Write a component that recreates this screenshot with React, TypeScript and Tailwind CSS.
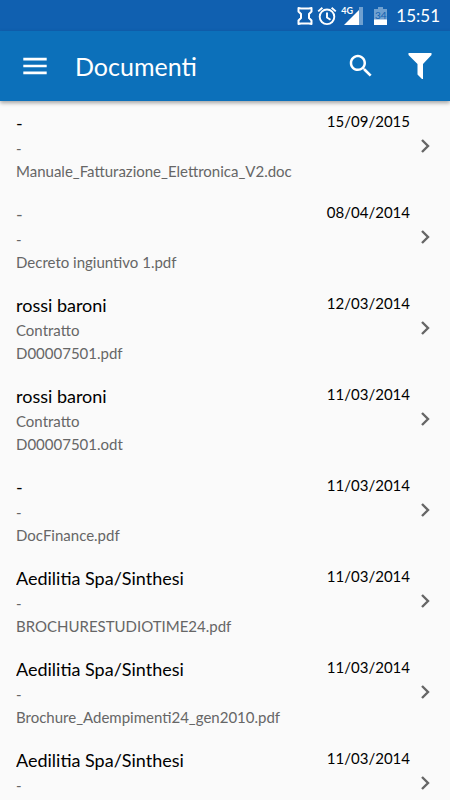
interface DocumentItem {
  id: number;
  title: string;
  subtitle: string;
  file?: string;
  date: string;
  dimmed?: boolean;
}

const documents: DocumentItem[] = [
  { id: 1, title: "-", subtitle: "-", file: "Manuale_Fatturazione_Elettronica_V2.doc", date: "15/09/2015" },
  { id: 2, title: "-", subtitle: "-", file: "Decreto ingiuntivo 1.pdf", date: "08/04/2014", dimmed: true },
  { id: 3, title: "rossi baroni", subtitle: "Contratto", file: "D00007501.pdf", date: "12/03/2014" },
  { id: 4, title: "rossi baroni", subtitle: "Contratto", file: "D00007501.odt", date: "11/03/2014" },
  { id: 5, title: "-", subtitle: "-", file: "DocFinance.pdf", date: "11/03/2014" },
  { id: 6, title: "Aedilitia Spa/Sinthesi", subtitle: "-", file: "BROCHURESTUDIOTIME24.pdf", date: "11/03/2014" },
  { id: 7, title: "Aedilitia Spa/Sinthesi", subtitle: "-", file: "Brochure_Adempimenti24_gen2010.pdf", date: "11/03/2014" },
  { id: 8, title: "Aedilitia Spa/Sinthesi", subtitle: "-", date: "11/03/2014" },
];

function StatusBar() {
  return (
    <div className="flex h-[31px] shrink-0 items-center justify-end bg-[#1060b0] pr-[10px] text-white">
      <svg className="mr-1 h-5 w-4" viewBox="0 0 16 20" fill="none" stroke="currentColor" strokeWidth="2">
        <path d="M1.500 2 4 2.500h8l2.500-.5v3.500L12 8v4l2.500 2.500V18l-2.500-.5H4L1.500 18v-3.500L4 12V8L1.500 5.500z" strokeLinejoin="round" />
      </svg>
      <svg className="mr-1 h-5 w-5" viewBox="0 0 20 20" fill="none" stroke="currentColor" strokeWidth="1.900">
        <circle cx="10" cy="10.800" r="7.300" />
        <path d="M1.200 5.400 5.400 1.800M18.800 5.400 14.600 1.800M10 6.500v5l3.500 2.200" />
      </svg>
      <div className="relative mr-[11px] h-5 w-[22px]">
        <svg className="h-5 w-[22px]" viewBox="0 0 22 20">
          <path d="M18 1h4v18h-4z" fill="#6fa0d0" />
          <path d="M18 4v15H3z" fill="#fff" />
          <path d="M0 0h14v8H0z" fill="#1060b0" />
        </svg>
        <span className="absolute top-0 left-0 text-[9px] leading-[9px] font-bold">4G</span>
      </div>
      <div className="relative mr-[9px] h-5 w-[13px]">
        <svg className="h-5 w-[13px]" viewBox="0 0 13 20">
          <path d="M4 1h5v2h4v11H0V3h4z" fill="#6fa0d0" />
          <path d="M0 13.500h13V19H0z" fill="#fff" />
        </svg>
        <span className="absolute inset-x-0 top-1 text-center text-[10px] leading-[10px] text-[#1060b0]">34</span>
      </div>
      <span className="text-[17px] leading-none">15:51</span>
    </div>
  );
}

function TopBar() {
  return (
    <header className="z-10 flex h-[70px] shrink-0 items-center bg-[#0c70ba] pr-[17px] pl-[17px] text-white shadow-[0_2px_4px_rgba(0,0,0,0.35)]">
      <button type="button" aria-label="Menu">
        <svg className="h-9 w-9" viewBox="0 0 24 24" fill="currentColor">
          <path d="M4.200 17.500h15.600v-1.800H4.200zm0-4.600h15.600v-1.800H4.200zm0-6.400v1.800h15.600V6.500z" />
        </svg>
      </button>
      <h1 className="ml-[22px] flex-1 text-[25px] leading-8">Documenti</h1>
      <button type="button" aria-label="Cerca">
        <svg className="h-[30px] w-[30px]" viewBox="0 0 24 24" fill="currentColor">
          <path d="M15.500 14h-.79l-.28-.27C15.410 12.590 16 11.110 16 9.500 16 5.910 13.090 3 9.500 3S3 5.910 3 9.500 5.910 16 9.500 16c1.610 0 3.090-.59 4.230-1.570l.27.28v.79l5 4.990L20.490 19l-4.990-5zm-6 0C7.010 14 5 11.990 5 9.500S7.010 5 9.500 5 14 7.010 14 9.500 11.990 14 9.500 14z" />
        </svg>
      </button>
      <button type="button" aria-label="Filtra" className="ml-[31px]">
        <svg className="h-7 w-[26px]" viewBox="0 0 26 28" fill="currentColor">
          <path d="M1.500 1h23v2L16 12v15h-1l-4.500-4.500V12L1.500 3z" />
        </svg>
      </button>
    </header>
  );
}

function DocumentRow({ item }: { item: DocumentItem }) {
  return (
    <li>
      <button type="button" className="flex min-h-[91px] w-full items-center py-[9px] pr-3 pl-4 text-left">
        <span className="min-w-0 flex-1 self-start">
          <span className={`block truncate text-lg leading-[27px] ${item.dimmed ? "text-[#666]" : "text-black"}`}>
            {item.title}
          </span>
          <span className="block truncate text-[15px] leading-[23px] text-[#666]">{item.subtitle}</span>
          {item.file && (
            <span className="block truncate text-[15px] leading-[23px] text-[#666]">{item.file}</span>
          )}
        </span>
        <span className="self-start text-[15px] leading-[23px] text-black">{item.date}</span>
        <svg className="ml-1 h-6 w-6 text-[#666]" viewBox="0 0 24 24" fill="none" stroke="currentColor" strokeWidth="2.400">
          <path d="m8 5 6 6-6 6" />
        </svg>
      </button>
    </li>
  );
}

export default function App() {
  return (
    <div className="flex h-screen flex-col bg-[#fafafa] font-[Lato,sans-serif]">
      <StatusBar />
      <TopBar />
      <ul className="min-h-0 flex-1 overflow-y-auto [scrollbar-width:none]">
        {documents.map((item) => (
          <DocumentRow key={item.id} item={item} />
        ))}
      </ul>
    </div>
  );
}
